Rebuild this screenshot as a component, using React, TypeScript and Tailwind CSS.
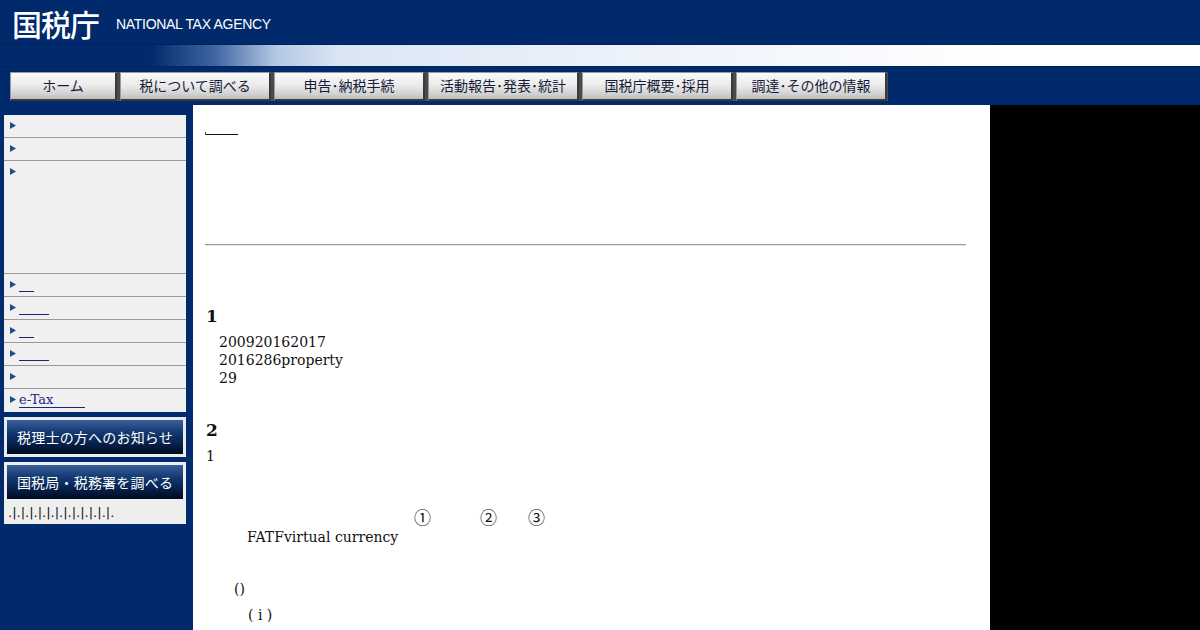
const navItems = [
  { label: "ホーム", w: "w-[107px]" },
  { label: "税について調べる", w: "w-[151px]" },
  { label: "申告･納税手続", w: "w-[151px]" },
  { label: "活動報告･発表･統計", w: "w-[151px]" },
  { label: "国税庁概要･採用", w: "w-[151px]" },
  { label: "調達･その他の情報", w: "w-[151px]" },
]

// sidebar rows: height + width of the (blank) underlined link
const sideRows = [
  { h: "h-[23px]", link: 0 },
  { h: "h-[23px]", link: 0 },
  { h: "h-[113px]", link: 0 },
  { h: "h-[23px]", link: 15 },
  { h: "h-[23px]", link: 30 },
  { h: "h-[23px]", link: 15 },
  { h: "h-[23px]", link: 30 },
  { h: "h-[23px]", link: 0 },
]

const Arrow = () => (
  <svg width="6" height="7" viewBox="0 0 6 7" className="mt-[7px] shrink-0">
    <path d="M0 0 L6 3.5 L0 7 Z" fill="#1f4c8c" />
  </svg>
)

const BlueButton = ({ children }: { children: string }) => (
  <div className="h-[34px] flex items-center justify-center bg-[linear-gradient(to_bottom,#3a609a_0%,#143a72_35%,#06214d_70%,#000a1e_100%)] text-white text-[14px] font-['Noto_Sans_CJK_JP',sans-serif] tracking-[0.2px]">
    {children}
  </div>
)

const App = () => {
  return (
    <div className="w-[1200px] h-[630px] overflow-hidden bg-[#002a6b] font-['DejaVu_Serif',serif]">
      {/* HEADER */}
      <div className="h-[45px] flex items-center pl-[12px] border-b border-[#00215a]">
        <span className="text-white text-[30px] leading-none font-['Noto_Sans_CJK_JP',sans-serif] font-medium tracking-[-1px] mt-[1px]">国税庁</span>
        <span className="ml-[17px] mt-[5px] text-white text-[14px] tracking-[-0.3px] font-['Liberation_Sans',sans-serif]">NATIONAL TAX AGENCY</span>
      </div>
      <div className="h-[21px] bg-[linear-gradient(to_right,#002a6b_0px,#002a6b_150px,#3f66a2_215px,#b3c7e4_275px,#dbe6f5_340px,#ebf1fa_600px,#ffffff_1000px)]" />
      {/* NAV */}
      <div className="h-[39px] pt-[5px] pl-[10px] border-t border-[#00235c]">
        <div className="flex gap-[3px] h-[29px] w-[878px] bg-[#4a4a4a]">
          {navItems.map((n) => (
            <div
              key={n.label}
              className={`${n.w} h-full flex items-center justify-center pb-[1px] border-t border-l border-[#9a9a9a] border-r-2 border-b-2 border-r-[#3a3a3a] border-b-[#3a3a3a] bg-[linear-gradient(to_bottom,#fafafa_0%,#ececec_45%,#d2d2d2_80%,#bdbdbd_100%)] text-[#151c38] text-[14px] font-['Noto_Sans_CJK_JP',sans-serif]`}
            >
              {n.label}
            </div>
          ))}
        </div>
      </div>

      <div className="flex h-[525px]">
        {/* SIDEBAR */}
        <div className="w-[193px] shrink-0 pl-[4px] pr-[7px] pt-[10px]">
          <div className="bg-[#f0f0f0]">
            {sideRows.map((r, i) => (
              <div key={i} className={`${r.h} flex items-start pl-[6px] border-b border-[#9a9a9a]`}>
                <Arrow />
                {r.link > 0 && (
                  <a className="ml-[3px] inline-block h-[18px] border-b border-[#1a237e]" style={{ width: r.link }} />
                )}
              </div>
            ))}
            <div className="h-[23px] flex items-start pl-[6px]">
              <Arrow />
              <a className="ml-[3px] w-[66px] h-[19px] pt-[3px] leading-[15px] text-[13px] text-[#1a237e] border-b border-[#1a237e]">e-Tax</a>
            </div>
          </div>
          <div className="mt-[5px] bg-[#e9ebf2] p-[3px]">
            <BlueButton>税理士の方へのお知らせ</BlueButton>
          </div>
          <div className="mt-[5px] bg-[#eeeeee] pt-[3px] px-[3px] h-[62px]">
            <BlueButton>国税局・税務署を調べる</BlueButton>
            <div className="pl-[1px] pt-[5px] text-[13px] leading-[17px] text-[#111] font-['DejaVu_Sans',sans-serif]">.|.|.|.|.|.|.|.|.|.|.|.|.</div>
          </div>
        </div>

        {/* MAIN */}
        <div className="w-[797px] shrink-0 bg-white pl-[12px] pr-[24px] pt-[16px] text-[14px] leading-[18px] text-[#111]">
          <div className="h-[18px] flex items-end pb-[4px]">
            <a className="flex items-end">
              <span className="w-[1px] h-[3px] bg-[#444]" />
              <span className="w-[32px] h-[1px] bg-[#111]" />
            </a>
          </div>
          <div className="mt-[105px] border-t border-[#9a9a9a] border-b border-b-[#e4e4e4]" />

          <h3 className="mt-[60px] text-[17px] leading-[20px] font-bold pl-[1px]">1</h3>
          <div className="mt-[7px] pl-[14px]">
            <div>200920162017</div>
            <div>2016286property</div>
            <div>29</div>
          </div>

          <h3 className="mt-[33px] text-[17px] leading-[20px] font-bold pl-[1px]">2</h3>
          <div className="mt-[7px] pl-[1px]">1</div>

          <div className="mt-[42px] h-[19px] flex items-center font-['Noto_Sans_CJK_JP',sans-serif] text-[17px] leading-[19px]">
            <span className="ml-[209px]">①</span>
            <span className="ml-[49px]">②</span>
            <span className="ml-[31px]">③</span>
          </div>
          <div className="mt-[2px] pl-[42px]">FATFvirtual currency</div>

          <div className="mt-[34px] pl-[29px]">()</div>
          <div className="mt-[8px] pl-[43px]">( i )</div>
        </div>

        {/* RIGHT */}
        <div className="flex-1 bg-black" />
      </div>
    </div>
  )
}

export default App
